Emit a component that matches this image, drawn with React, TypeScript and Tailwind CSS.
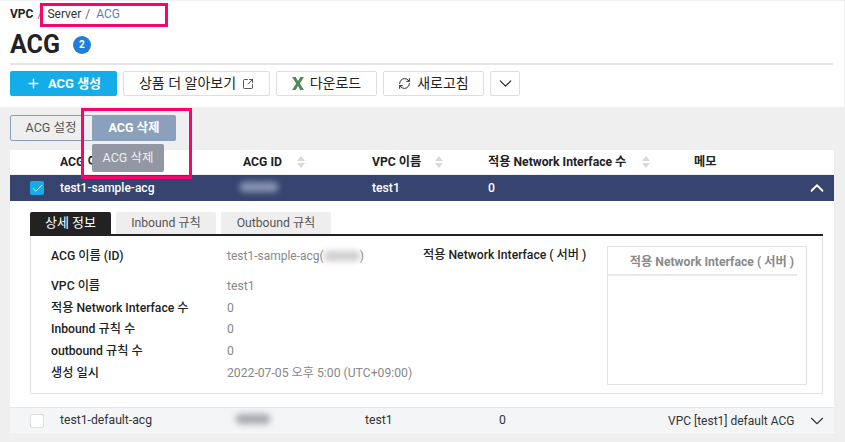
import React from 'react';
import { Plus, SquareArrowOutUpRight, RefreshCw, ChevronDown, ChevronUp, Check } from 'lucide-react';

const fontStack = { fontFamily: 'Roboto, "Noto Sans CJK KR", sans-serif' };

const SortArrows = () => (
  <svg width="8" height="12" viewBox="0 0 8 12" className="shrink-0">
    <path d="M4 0 L8 5 H0 Z" fill="#d6d8dc" />
    <path d="M4 12 L8 7 H0 Z" fill="#d6d8dc" />
  </svg>
);

const ExcelIcon = () => (
  <svg width="12" height="13" viewBox="0 0 12 13" className="shrink-0">
    <path d="M0 0 H3.6 L6 4 L8.4 0 H12 L7.8 6.4 L12 13 H8.2 L6 9 L3.6 13 H0 L4.2 6.4 Z" fill="#4c8a5c" />
  </svg>
);

const Blurred = ({ w, className = '' }: { w: string; className?: string }) => (
  <span className={`inline-block h-[10px] rounded-sm blur-[3px] ${w} ${className}`} />
);

const detailRows = [
  { label: '적용 Network Interface 수', value: '0' },
  { label: 'Inbound 규칙 수', value: '0' },
  { label: 'outbound 규칙 수', value: '0' },
  { label: '생성 일시', value: '2022-07-05 오후 5:00 (UTC+09:00)' },
];

export default function App() {
  return (
    <div className="relative h-[442px] w-[845px] overflow-hidden bg-[#efefef] pt-px" style={fontStack}>
      {/* Page header */}
      <div className="h-[106px] w-[844px] bg-white pl-[10px] pr-[11px]">
        <div className="flex h-[26px] items-center text-[12px] text-[#333]">
          <span className="font-bold text-[#222]">VPC</span>
          <span className="ml-[4px] text-[#777]">/</span>
          <span className="ml-[5px]">Server</span>
          <span className="ml-[4px] text-[#666]">/</span>
          <span className="ml-[6px] text-[#5b7fb5]">ACG</span>
        </div>
        <div className="flex h-[38px] items-center border-b-2 border-[#e5e5e5] pb-[1px]">
          <h1 className="text-[25px] font-bold leading-none text-[#222]">ACG</h1>
          <span className="ml-[13px] flex h-[18px] w-[18px] items-center justify-center rounded-full bg-[#1f7fd6] text-[10px] font-bold text-white">2</span>
        </div>
        <div className="mt-[6px] flex h-[25px] gap-[6px] text-[14px] text-[#222]">
          <button className="flex w-[107px] items-center justify-center gap-[7px] rounded-[2px] bg-[#15ade9] text-[13px] font-bold text-white">
            <Plus size={15} strokeWidth={2.25} />
            <span>ACG 생성</span>
          </button>
          <button className="flex w-[147px] items-center justify-center gap-[6px] rounded-[2px] border border-[#dedede]">
            <span>상품 더 알아보기</span>
            <SquareArrowOutUpRight size={12} strokeWidth={1.5} />
          </button>
          <button className="flex w-[101px] items-center justify-center gap-[6px] rounded-[2px] border border-[#dedede]">
            <ExcelIcon />
            <span>다운로드</span>
          </button>
          <button className="flex w-[101px] items-center justify-center gap-[6px] rounded-[2px] border border-[#dedede]">
            <RefreshCw size={13} strokeWidth={1.75} />
            <span>새로고침</span>
          </button>
          <button className="flex w-[30px] items-center justify-center rounded-[2px] border border-[#dedede]">
            <ChevronDown size={21} strokeWidth={1.25} />
          </button>
        </div>
      </div>

      {/* Action buttons */}
      <div className="ml-[10px] mt-[8px] flex h-[26px] text-[12.5px]">
        <button className="w-[83px] rounded-l-[2px] border border-[#8ba0bd] pr-px text-[#555]">ACG 설정</button>
        <button className="-ml-px w-[84px] rounded-[2px] bg-[#8ba0bd] font-bold text-white">ACG 삭제</button>
      </div>

      {/* Table */}
      <div className="ml-[10px] mt-[9px] w-[824px] rounded-t-[2px] bg-white text-[12.2px]">
        <div className="flex h-[25px] items-center border-b border-[#eee] pt-px font-bold text-[#222]">
          <span className="ml-[50px] w-[183px]">ACG 이름</span>
          <span className="flex w-[129px] items-center gap-[15px]">ACG ID <SortArrows /></span>
          <span className="flex w-[116px] items-center gap-[14px]">VPC 이름 <SortArrows /></span>
          <span className="flex w-[206px] items-center gap-[16px]">적용 Network Interface 수 <SortArrows /></span>
          <span>메모</span>
        </div>
        <div className="flex h-[26px] items-center bg-[#36446f] text-white">
          <span className="ml-[20px] flex h-[14px] w-[14px] items-center justify-center rounded-[2px] bg-[#15ade9]">
            <Check size={13} strokeWidth={1.5} />
          </span>
          <span className="ml-[16px] w-[183px] text-[12px] font-medium">test1-sample-acg</span>
          <span className="w-[129px]"><Blurred w="w-[38px]" className="-ml-[3px] bg-[#8c96b4]" /></span>
          <span className="w-[116px] font-medium">test1</span>
          <span className="flex-1 font-medium">0</span>
          <ChevronUp size={22} strokeWidth={2} className="mr-[6px]" />
        </div>

        {/* Detail panel */}
        <div className="h-[206px] px-[20px] pt-[11px] pr-[11px]">
          <div className="flex h-[24px] gap-[5px] border-b-2 border-[#222] text-[12.2px]">
            <button className="w-[81px] rounded-t-[2px] bg-[#222] text-[13px] text-white">상세 정보</button>
            <button className="w-[100px] rounded-t-[2px] bg-[#eee] text-[#555]">Inbound 규칙</button>
            <button className="w-[110px] rounded-t-[2px] bg-[#eee] text-[#555]">Outbound 규칙</button>
          </div>
          <div className="flex h-[158px] border border-t-0 border-[#e3e3e3] pl-[20px] pt-[10px]">
            <div className="w-[372px] pt-[0.5px]">
              <div className="flex h-[19px] items-center">
                <span className="w-[176px] font-medium text-[#222]">ACG 이름 (ID)</span>
                <span className="flex items-center text-[12px] text-[#888]">test1-sample-acg(<Blurred w="w-[36px]" className="bg-[#ccc]" />)</span>
              </div>
              <div className="mt-[11px] flex h-[19px] items-center">
                <span className="w-[176px] font-medium text-[#222]">VPC 이름</span>
                <span className="text-[#888]">test1</span>
              </div>
              {detailRows.map((row) => (
                <div key={row.label} className="mt-[2.75px] flex h-[19px] items-center">
                  <span className="w-[176px] font-medium text-[#222]">{row.label}</span>
                  <span className="text-[#888]">{row.value}</span>
                </div>
              ))}
            </div>
            <div className="flex h-[19px] w-[184px] items-center font-medium text-[#222]">적용 Network Interface ( 서버 )</div>
            <div className="h-[139px] w-[200px] border border-[#e3e3e3]">
              <div className="mr-[9px] flex h-[29px] items-center justify-end border-b-2 border-[#e8e8e8] pr-[3px] pt-[3px] font-bold text-[#8a8a8a]">
                적용 Network Interface ( 서버 )
              </div>
            </div>
          </div>
        </div>

        {/* Second row */}
        <div className="flex h-[26px] items-center rounded-b-[2px] border-t border-[#e5e5e5] bg-[#f4f5f7] text-[#333]">
          <span className="ml-[20px] h-[14px] w-[14px] rounded-[2px] border border-[#ddd] bg-white" />
          <span className="ml-[16px] w-[176px]">test1-default-acg</span>
          <span className="w-[129px]"><Blurred w="w-[34px]" className="bg-[#a5a8ae]" /></span>
          <span className="w-[134px]">test1</span>
          <span className="w-[169px]">0</span>
          <span className="w-[138px] whitespace-nowrap text-[12px]">VPC [test1] default ACG</span>
          <ChevronDown size={22} strokeWidth={1.25} />
        </div>
      </div>

      {/* Annotations drawn over the capture */}
      <div className="absolute left-[40px] top-[3px] h-[24px] w-[128px] border-[3px] border-[#f5066d]" />
      <div className="absolute left-[81px] top-[108px] h-[71px] w-[111px] border-[3px] border-[#f5066d]" />
      <div className="absolute left-[92px] top-[144px] flex h-[28px] w-[72px] items-center justify-center rounded-[2px] bg-[#9297a4] text-[12.5px] text-[#f0f0f0]">ACG 삭제</div>
    </div>
  );
}
